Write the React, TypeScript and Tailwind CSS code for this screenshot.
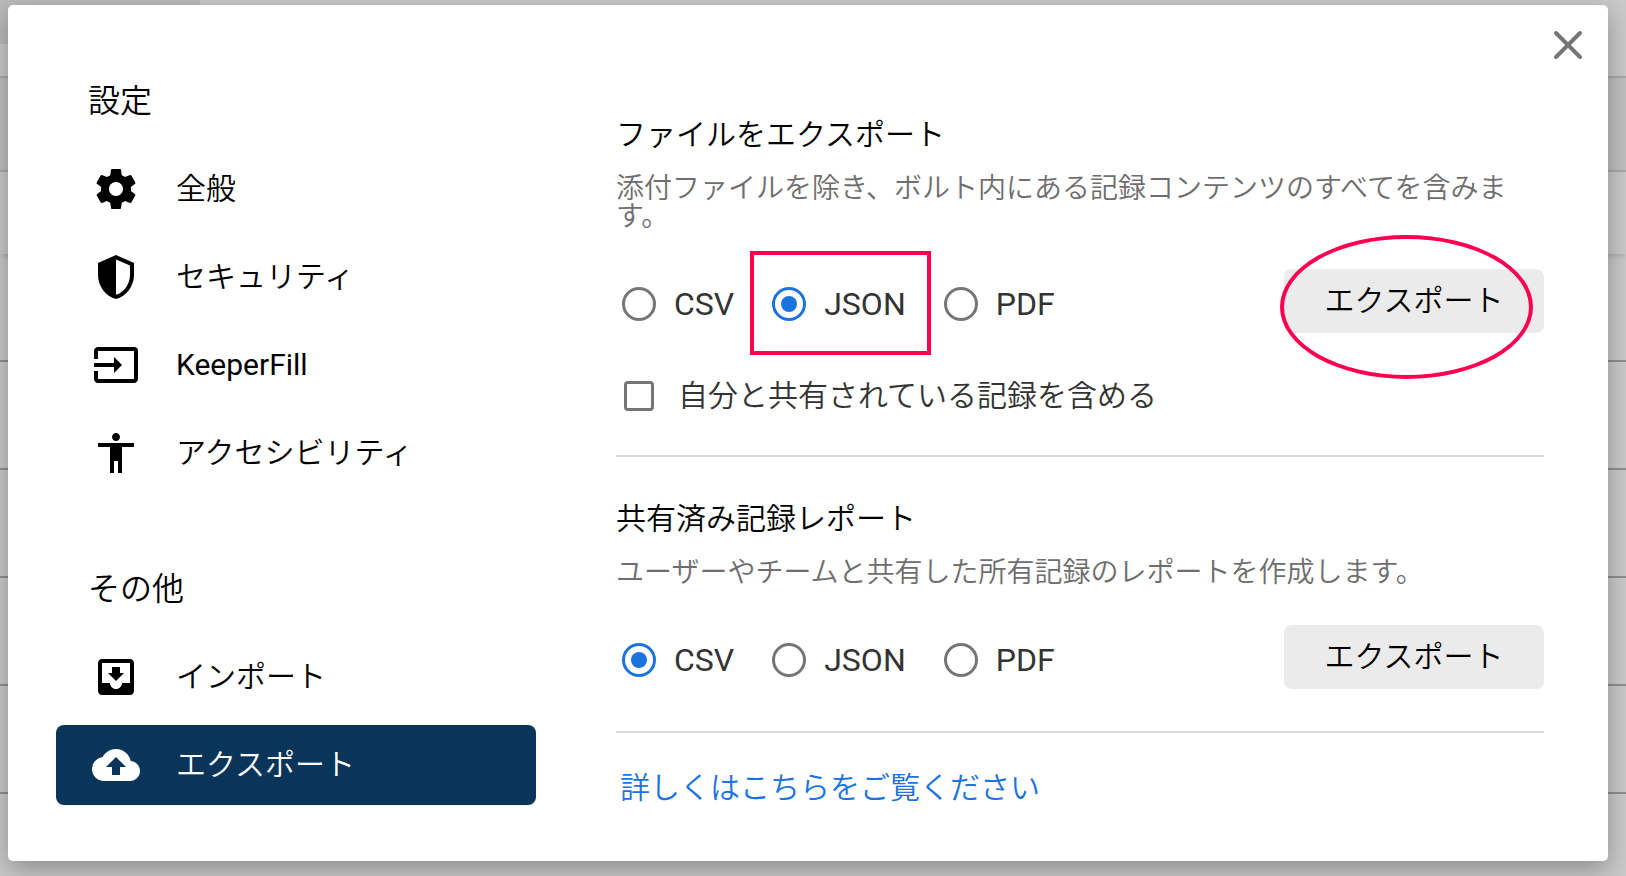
import { useState, type ReactNode } from "react";
import { MdAccessibility, MdBackup, MdInput, MdMoveToInbox } from "react-icons/md";

const FORMATS = ["CSV", "JSON", "PDF"];

const GearIcon = () => (
  <svg viewBox="0 0 24 24" className="size-12" fill="currentColor" aria-hidden="true">
    <path d="M19.43 12.98c.04-.32.07-.64.07-.98s-.03-.66-.07-.98l2.11-1.65c.19-.15.24-.42.12-.64l-2-3.46c-.12-.22-.39-.3-.61-.22l-2.49 1c-.52-.4-1.08-.73-1.69-.98l-.38-2.65C14.46 2.18 14.25 2 14 2h-4c-.25 0-.46.18-.49.42l-.38 2.65c-.61.25-1.17.59-1.69.98l-2.49-1c-.23-.09-.49 0-.61.22l-2 3.46c-.13.22-.07.49.12.64l2.11 1.65c-.04.32-.07.65-.07.98s.03.66.07.98l-2.11 1.65c-.19.15-.24.42-.12.64l2 3.46c.12.22.39.3.61.22l2.49-1c.52.4 1.08.73 1.69.98l.38 2.65c.03.24.24.42.49.42h4c.25 0 .46-.18.49-.42l.38-2.65c.61-.25 1.17-.59 1.69-.98l2.49 1c.23.09.49 0 .61-.22l2-3.46c.12-.22.07-.49-.12-.64l-2.11-1.65zM12 15.5c-1.93 0-3.5-1.57-3.5-3.5s1.57-3.5 3.5-3.5 3.5 1.57 3.5 3.5-1.57 3.5-3.5 3.5z" />
  </svg>
);

const ShieldIcon = () => (
  <svg viewBox="0 0 24 24" className="size-12" fill="currentColor" aria-hidden="true">
    <path
      fillRule="evenodd"
      d="M12 1 3 5v6c0 5.55 3.84 10.74 9 12 5.16-1.26 9-6.45 9-12V5l-9-4zm0 2.19 7 3.11V11c0 4.52-2.98 8.69-7 9.93V3.19z"
    />
  </svg>
);

interface NavItemProps {
  icon: ReactNode;
  label: ReactNode;
  active?: boolean;
}

const NavItem = ({ icon, label, active = false }: NavItemProps) => (
  <li>
    <button
      type="button"
      aria-current={active ? "page" : undefined}
      className={
        active
          ? "flex h-20 w-full items-center gap-9 rounded-lg bg-[#0a355a] pl-9 text-white"
          : "flex h-20 w-full items-center gap-9 rounded-lg pl-9 text-black"
      }
    >
      {icon}
      <span className="text-[30px] leading-10">{label}</span>
    </button>
  </li>
);

interface FormatRowProps {
  name: string;
  initial: string;
  marked?: boolean;
}

const FormatRow = ({ name, initial, marked = false }: FormatRowProps) => {
  const [format, setFormat] = useState(initial);

  return (
    <div className="flex items-center justify-between">
      <div className="flex items-center gap-[38px] pt-[6px] pl-[6px]">
        {FORMATS.map((item) => (
          <label
            key={item}
            className="relative flex items-center gap-[18px] text-[32px] leading-10 font-normal text-[#333]"
          >
            <input
              type="radio"
              name={name}
              value={item}
              checked={format === item}
              onChange={() => setFormat(item)}
              className="size-[34px] appearance-none rounded-full border-3 border-[#757575] bg-clip-content p-[6px] checked:border-[#1a73de] checked:bg-[#1a73de]"
            />
            {item}
            {marked && item === "JSON" && (
              <span className="pointer-events-none absolute -top-[33px] -left-[22px] h-[104px] w-[181px] border-4 border-[#ff004f]" />
            )}
          </label>
        ))}
      </div>
      <div className="relative">
        <button type="button" className="h-16 w-[260px] rounded-lg bg-[#ebebeb] text-[30px] leading-10 text-black">
          エクスポート
        </button>
        {marked && (
          <span className="pointer-events-none absolute -top-[34px] -left-1 h-36 w-[253px] rounded-[50%] border-4 border-[#ff004f]" />
        )}
      </div>
    </div>
  );
};

const Backdrop = () => (
  <div className="absolute inset-0 -z-10 overflow-hidden bg-[#c9c9c9]" aria-hidden="true">
    <div className="flex h-11 bg-[#c9c9c9]">
      <div className="w-[200px] bg-[#bababa]" />
    </div>
    <div className="h-8" />
    <div className="h-[94px] border-t-2 border-[#a8a8a8] bg-[#bfbfbf]" />
    <div className="h-[84px] border-t-2 border-[#a8a8a8] shadow-md" />
    <div className="h-[108px] border-b-2 border-[#8d9090]" />
    <div className="h-[108px] border-b-2 border-[#8d9090]" />
    <div className="h-[108px] border-b-2 border-[#8d9090]" />
    <div className="h-[108px] border-b-2 border-[#8d9090]" />
    <div className="h-[108px] border-b-2 border-[#8d9090]" />
  </div>
);

const App = () => {
  return (
    <div
      lang="ja"
      className="relative isolate flex min-h-screen pt-[5px] pr-[18px] pb-[15px] pl-2 font-[Roboto,'Noto_Sans_CJK_JP',sans-serif] font-[350]"
    >
      <Backdrop />
      <div
        role="dialog"
        aria-label="設定"
        className="relative flex flex-1 gap-20 rounded-[5px] bg-white pr-16 pl-12 shadow-[0_8px_24px_rgba(0,0,0,0.3)]"
      >
        <button type="button" aria-label="閉じる" className="absolute top-5 right-5 text-[#757575]">
          <svg viewBox="0 0 40 40" className="size-10" stroke="currentColor" strokeWidth="4" strokeLinecap="round">
            <path d="M8 8l24 24M32 8L8 32" />
          </svg>
        </button>

        <nav className="w-[480px] shrink-0 pt-[76px]">
          <h2 className="pl-8 text-[32px] leading-10">設定</h2>
          <ul className="mt-7 space-y-2">
            <NavItem icon={<GearIcon />} label="全般" />
            <NavItem icon={<ShieldIcon />} label="セキュリティ" />
            <NavItem icon={<MdInput className="size-12" />} label={<span className="font-normal">KeeperFill</span>} />
            <NavItem icon={<MdAccessibility className="size-12" />} label="アクセシビリティ" />
          </ul>
          <h2 className="mt-[76px] pl-8 text-[32px] leading-10">その他</h2>
          <ul className="mt-7 space-y-2">
            <NavItem icon={<MdMoveToInbox className="size-12" />} label="インポート" />
            <NavItem icon={<MdBackup className="size-12" />} label="エクスポート" active />
          </ul>
        </nav>

        <main className="min-w-0 flex-1 pt-[110px]">
          <section className="border-b-2 border-[#dadada] pb-[39px]">
            <h3 className="text-[30px] leading-10">ファイルをエクスポート</h3>
            <p className="mt-5 mb-[38px] text-[28px] leading-7 text-[#6e6e6e]">
              添付ファイルを除き、ボルト内にある記録コンテンツのすべてを含みます。
            </p>
            <FormatRow name="vault-format" initial="JSON" marked />
            <label className="mt-[43px] flex items-center gap-6 pl-2 text-[30px] leading-10 text-[#333]">
              <input type="checkbox" className="size-[30px] appearance-none rounded-sm border-3 border-[#757575]" />
              自分と共有されている記録を含める
            </label>
          </section>

          <section className="border-b-2 border-[#dadada] pt-[42px] pb-[42px]">
            <h3 className="text-[30px] leading-10">共有済み記録レポート</h3>
            <p className="mt-5 mb-[38px] text-[28px] leading-7 text-[#6e6e6e]">
              ユーザーやチームと共有した所有記録のレポートを作成します。
            </p>
            <FormatRow name="report-format" initial="CSV" />
          </section>

          <a href="#" className="mt-[35px] ml-1 inline-block text-[30px] leading-10 text-[#1a73de]">
            詳しくはこちらをご覧ください
          </a>
        </main>
      </div>
    </div>
  );
};

export default App;
